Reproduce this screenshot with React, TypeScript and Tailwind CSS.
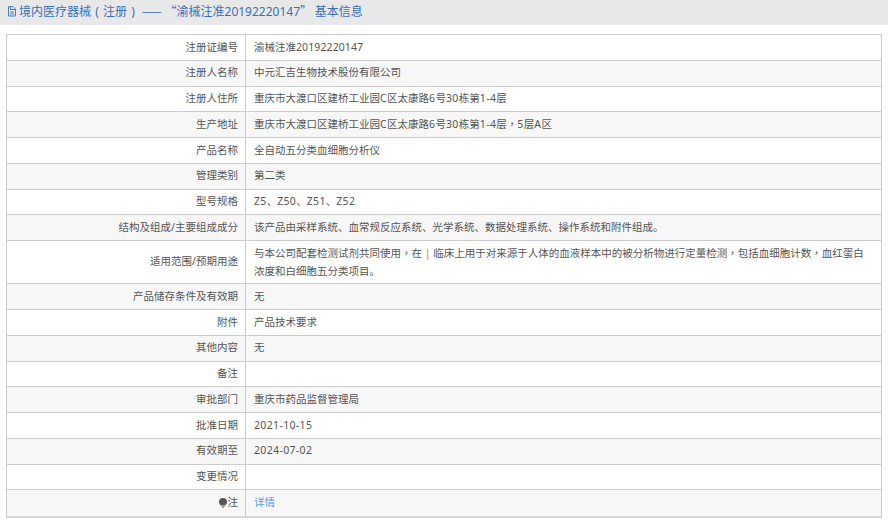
type Row = { label: string; value: string; tall?: boolean; latin?: string };

const ROWS: Row[] = [
  { label: '注册证编号', value: '渝械注准20192220147', latin: 'tracking-[0.1px]' },
  { label: '注册人名称', value: '中元汇吉生物技术股份有限公司' },
  { label: '注册人住所', value: '重庆市大渡口区建桥工业园C区太康路6号30栋第1-4层', latin: 'tracking-[0.4px]' },
  { label: '生产地址', value: '重庆市大渡口区建桥工业园C区太康路6号30栋第1-4层，5层A区', latin: 'tracking-[0.4px]' },
  { label: '产品名称', value: '全自动五分类血细胞分析仪' },
  { label: '管理类别', value: '第二类' },
  { label: '型号规格', value: 'Z5、Z50、Z51、Z52', latin: 'tracking-[0.33px]' },
  { label: '结构及组成/主要组成成分', value: '该产品由采样系统、血常规反应系统、光学系统、数据处理系统、操作系统和附件组成。' },
  {
    label: '适用范围/预期用途',
    value: '与本公司配套检测试剂共同使用，在 | 临床上用于对来源于人体的血液样本中的被分析物进行定量检测，包括血细胞计数，血红蛋白\n浓度和白细胞五分类项目。',
    tall: true,
  },
  { label: '产品储存条件及有效期', value: '无' },
  { label: '附件', value: '产品技术要求' },
  { label: '其他内容', value: '无' },
  { label: '备注', value: '' },
  { label: '审批部门', value: '重庆市药品监督管理局' },
  { label: '批准日期', value: '2021-10-15', latin: 'tracking-[0.35px]' },
  { label: '有效期至', value: '2024-07-02', latin: 'tracking-[0.35px]' },
  { label: '变更情况', value: '' },
];

// commas sit centred in the cell in the TC cut of the font
const PUNCT = "font-['Noto_Sans_CJK_TC',sans-serif]";

function Value({ row }: { row: Row }) {
  return (
    <div>
      {row.value.split('\n').map((line) => (
        <div key={line} className="whitespace-nowrap">
          {line.split(/(，|\||[A-Za-z0-9-]+)/).map((part, i) => {
            if (part === '，') return <span key={i} className={PUNCT}>{part}</span>;
            if (part === '|') return <span key={i} className="font-bold text-[#d4a26a]">{part}</span>;
            if (/^[A-Za-z0-9-]+$/.test(part)) return <span key={i} className={row.latin}>{part}</span>;
            return part;
          })}
        </div>
      ))}
    </div>
  );
}

function DocIcon() {
  return (
    <svg viewBox="0 0 10 12" className="mr-[2px] mt-[3px] h-[12px] w-[10px] shrink-0" fill="none" stroke="#4a7cc4" strokeWidth="1">
      <path d="M1.5 1.5h4.5l2.5 2.5v7h-7z" />
      <path d="M3.5 1.5v3h5M3 7h4M3 9h4" />
    </svg>
  );
}

function BulbIcon() {
  return (
    <svg viewBox="0 0 8 10" className="h-[10px] w-[8px] shrink-0" fill="#555">
      <path d="M4 0a4 4 0 0 1 4 4c0 1.6-1 2.4-1.8 3.4H1.8C1 6.4 0 5.6 0 4a4 4 0 0 1 4-4z" />
      <path d="M2.6 8h2.8v.8L4.6 10H3.4l-.8-1.2z" fill="#999" />
    </svg>
  );
}

function Paren({ children }: { children: string }) {
  return <span className="inline-block w-[12px] text-center">{children}</span>;
}

export default function App() {
  return (
    <div className="h-[524px] w-[888px] overflow-hidden bg-white font-['Noto_Sans','Noto_Sans_CJK_SC',sans-serif] text-[10.5px] text-[#555]">
      <div className="flex h-[25px] items-start border-b border-[#ebe9f0] bg-[#e8e8e8] pl-[7px] pt-[2px] text-[12px] leading-[18px] text-[#3a6fb8]">
        <DocIcon />
        <span className="whitespace-pre">
          境内医疗器械<Paren>(</Paren>注册<Paren>)</Paren><span className={PUNCT}> —— “</span>渝械注准20192220147<span className={PUNCT}>” </span>基本信息
        </span>
      </div>

      <div className="ml-[6px] mt-[9px] w-[876px] border border-b-2 border-[#ccc] border-b-[#d8d8d8]">
        {ROWS.map((r, i) => (
          <div
            key={r.label}
            className={`flex border-b border-[#ccc] ${r.tall ? 'h-[43.3px]' : 'h-[25.75px]'} ${i % 2 === 1 ? 'bg-[#f7f7f7]' : 'bg-white'}`}
          >
            <div className="flex w-[239px] shrink-0 items-center justify-end border-r border-[#ccc] pr-[7px]">{r.label}</div>
            <div className="flex flex-1 items-center pl-[8px] pr-[16px] leading-[17.5px]">
              <Value row={r} />
            </div>
          </div>
        ))}
        <div className="flex h-[25.75px] bg-[#f7f7f7]">
          <div className="flex w-[239px] shrink-0 items-center justify-end gap-px border-r border-[#ccc] pr-[7px]">
            <BulbIcon />
            注
          </div>
          <div className="flex flex-1 items-center pl-[8px] text-[#4f9bf5]">详情</div>
        </div>
      </div>
    </div>
  );
}
